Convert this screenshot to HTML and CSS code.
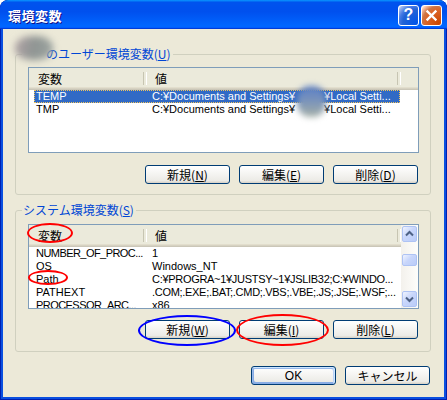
FILE: index.html
```html
<!DOCTYPE html>
<html lang="ja">
<head>
<meta charset="utf-8">
<title>環境変数</title>
<link rel="stylesheet" href="styles.css">
</head>
<body>
<div class="window">
  <div class="titlebar">
    <span class="title">環境変数</span>
    <div class="tb-controls">
      <div class="tb-btn help">?</div>
      <div class="tb-btn close"><svg width="21" height="21" viewBox="0 0 21 21"><path d="M6.5 6.5L14.5 14.5M14.5 6.5L6.5 14.5" stroke="#fff" stroke-width="2.4" stroke-linecap="square"/></svg></div>
    </div>
  </div>
  <div class="client">
    <fieldset class="group g-user">
      <legend><span class="uname"></span>のユーザー環境変数(<u>U</u>)</legend>
      <div class="list">
        <div class="lv">
          <div class="lv-head">
            <div class="hc c1">変数</div>
            <div class="hc c2">値</div>
            <div class="hc c3"></div>
          </div>
          <div class="lv-row sel">
            <div class="rc c1">TEMP</div>
            <div class="rc c2">C:¥Documents and Settings¥<span class="gap"></span>¥Local Setti...</div>
          </div>
          <div class="lv-row">
            <div class="rc c1">TMP</div>
            <div class="rc c2">C:¥Documents and Settings¥<span class="gap"></span>¥Local Setti...</div>
          </div>
        </div>
      </div>
      <div class="btn-row">
        <div class="btn">新規(<u>N</u>)</div>
        <div class="btn">編集(<u>E</u>)</div>
        <div class="btn">削除(<u>D</u>)</div>
      </div>
    </fieldset>
    <fieldset class="group g-sys">
      <legend>システム環境変数(<u>S</u>)</legend>
      <div class="list list-sys">
        <div class="lv">
          <div class="lv-head">
            <div class="hc c1">変数</div>
            <div class="hc c2">値</div>
          </div>
          <div class="lv-row">
            <div class="rc c1 caps">NUMBER_OF_PROC...</div>
            <div class="rc c2">1</div>
          </div>
          <div class="lv-row">
            <div class="rc c1">OS</div>
            <div class="rc c2">Windows_NT</div>
          </div>
          <div class="lv-row">
            <div class="rc c1">Path</div>
            <div class="rc c2 tight">C:¥PROGRA~1¥JUSTSY~1¥JSLIB32;C:¥WINDO...</div>
          </div>
          <div class="lv-row">
            <div class="rc c1">PATHEXT</div>
            <div class="rc c2 tight">.COM;.EXE;.BAT;.CMD;.VBS;.VBE;.JS;.JSE;.WSF;...</div>
          </div>
          <div class="lv-row">
            <div class="rc c1 caps">PROCESSOR_ARC...</div>
            <div class="rc c2">x86</div>
          </div>
        </div>
        <div class="sb">
          <div class="sb-btn"><svg width="15" height="16" viewBox="0 0 15 16"><path d="M4 9.5L7.5 6L11 9.5" fill="none" stroke="#4D6185" stroke-width="2"/></svg></div>
          <div class="sb-thumb"></div>
          <div class="sb-btn sb-down"><svg width="15" height="16" viewBox="0 0 15 16"><path d="M4 6.5L7.5 10L11 6.5" fill="none" stroke="#4D6185" stroke-width="2"/></svg></div>
        </div>
      </div>
      <div class="btn-row btn-row-sys">
        <div class="btn">新規(<u>W</u>)</div>
        <div class="btn">編集(<u>I</u>)</div>
        <div class="btn">削除(<u>L</u>)</div>
      </div>
    </fieldset>
    <div class="dlg-btns">
      <div class="btn btn-default">OK</div>
      <div class="btn">キャンセル</div>
    </div>
  </div>
  <div class="blob blob-user"></div>
  <div class="blob blob-path"></div>
  <div class="mark mark-red m-var"></div>
  <div class="mark mark-red m-path"></div>
  <div class="mark mark-blue m-new"></div>
  <div class="mark mark-red m-edit"></div>
</div>
</body>
</html>
```
FILE: styles.css
```css
* { box-sizing: border-box; }
html, body { margin: 0; padding: 0; background: #fff; }
body {
  font-family: "Noto Sans CJK JP", "Liberation Sans", sans-serif;
  font-size: 12px;
  color: #000;
}
.window {
  position: relative;
  width: 447px;
  height: 400px;
  background: #0A4FE0;
  border-radius: 8px 8px 0 0;
  box-shadow: inset 0 0 0 1px #0020B0;
  display: flex;
  flex-direction: column;
  overflow: hidden;
}
.titlebar {
  height: 29px;
  flex: none;
  display: flex;
  align-items: center;
  justify-content: space-between;
  padding: 0 5px 0 8px;
  border-radius: 8px 8px 0 0;
  background: linear-gradient(180deg, #0997ff, #0053ee 8%, #0050ee 40%, #06f 88%, #06f 93%, #005bff 95%, #003dd7 96%, #003dd7);
}
.title {
  color: #fff;
  font-weight: bold;
  font-size: 13px;
  letter-spacing: 0.5px;
  text-shadow: 1px 1px #0F1089;
  padding-top: 2px;
}
.tb-controls { display: flex; gap: 2px; padding-top: 1px; }
.tb-btn {
  width: 21px;
  height: 21px;
  border: 1px solid #fff;
  border-radius: 3px;
  display: flex;
  align-items: center;
  justify-content: center;
}
.help {
  background: radial-gradient(circle at 90% 90%, #0054e9 0%, #2263d5 55%, #4479e4 70%, #a3bbec 90%, #fff 100%);
  color: #fff;
  font-family: "Liberation Sans", sans-serif;
  font-weight: bold;
  font-size: 16px;
  line-height: 1;
}
.close {
  background: radial-gradient(circle at 90% 90%, #cc4600 0%, #dc6527 55%, #cd7546 70%, #ffccb2 90%, #fff 100%);
}
.close svg { display: block; margin: -1px; }

.client {
  flex: 1;
  margin: 0 3px 3px 3px;
  background: #ECE9D8;
  padding: 18px 0 0 12px;
  display: flex;
  flex-direction: column;
}
.group {
  margin: 0;
  width: 416px;
  min-width: 0;
  border: 1px solid #D0D0BF;
  border-radius: 3px;
  padding: 6px 11px 10px 12px;
}
.group legend {
  margin-left: -6px;
  padding: 0 2px 0 1px;
  line-height: 14px;
  height: 14px;
  color: #0046D5;
  white-space: nowrap;
}
.uname { display: inline-block; width: 23px; }
.g-sys { margin-top: 8px; padding-top: 7px; padding-bottom: 12px; }

.list {
  height: 86px;
  border: 1px solid #7F9DB9;
  background: #fff;
  display: flex;
  overflow: hidden;
}
.list-sys { height: 85px; }
.lv { flex: 1; min-width: 0; overflow: hidden; }
.lv-head {
  height: 22px;
  display: flex;
  background: #EBEADB;
  box-shadow: inset 0 -1px #CBC7B8, inset 0 -2px #D6D2C2, inset 0 -3px #E2DECD;
}
.hc {
  position: relative;
  display: flex;
  align-items: center;
  padding-bottom: 2px;
}
.hc::after {
  content: "";
  position: absolute;
  right: 0;
  top: 4px;
  bottom: 5px;
  width: 2px;
  border-left: 1px solid #C7C5B2;
  border-right: 1px solid #fff;
}
.hc.c1 { width: 118px; padding-left: 9px; }
.hc.c2 { width: 254px; padding-left: 8px; }
.hc.c3 { flex: 1; }
.hc.c3::after { display: none; }

.lv-row {
  display: flex;
  height: 13px;
  width: 366px;
  margin-left: 5px;
  font-family: "Liberation Sans", "Noto Sans CJK JP", sans-serif;
  font-size: 11px;
  line-height: 13px;
  white-space: nowrap;
}
.rc { overflow: hidden; }
.rc.c1 { width: 111px; padding-left: 2px; }
.rc.c2 { width: 255px; padding-left: 7px; }
.caps { letter-spacing: -0.55px; }
.tight { letter-spacing: -0.3px; }
.gap { display: inline-block; width: 29px; }
.sel {
  background: #316AC5;
  color: #fff;
  outline: 1px dotted #F2C45A;
  outline-offset: -1px;
}

.sb {
  width: 17px;
  flex: none;
  display: flex;
  flex-direction: column;
  align-items: flex-end;
  padding: 1px 1px 1px 0;
  background: linear-gradient(90deg, #F3F1EC, #FEFEFB);
}
.sb-btn, .sb-thumb {
  width: 15px;
  border: 1px solid #AEC3F4;
  border-radius: 2px;
  background: linear-gradient(135deg, #F0F4FF, #C8D6FB 45%, #BACCF8);
}
.sb-btn { height: 16px; }
.sb-btn svg { display: block; margin: -1px; }
.sb-thumb { height: 12px; margin-top: 12px; }
.sb-down { margin-top: auto; }

.btn-row {
  display: flex;
  justify-content: flex-end;
  gap: 9px;
  margin-top: 12px;
  padding-right: 1px;
}
.btn-row-sys { margin-top: 11px; }
.btn {
  width: 85px;
  height: 19px;
  border: 1px solid #003C74;
  border-radius: 3px;
  background: linear-gradient(180deg, #fff, #ECEBE6 86%, #D6D0C5);
  display: flex;
  align-items: center;
  justify-content: center;
  line-height: 1;
  white-space: nowrap;
}
.btn-default {
  font-family: "Liberation Sans", sans-serif;
  box-shadow: inset -1px 1px #CEE7FF, inset 1px 2px #98B8EA, inset -2px 2px #BCD4F6, inset 1px -1px #89ADE4, inset 2px -2px #89ADE4;
}
.dlg-btns {
  display: flex;
  justify-content: flex-end;
  gap: 9px;
  margin-top: 14px;
  margin-right: 14px;
}

.blob {
  position: absolute;
  border-radius: 45%;
}
.blob-user {
  left: 15px;
  top: 36px;
  width: 38px;
  height: 24px;
  background: linear-gradient(100deg, #B2A3A6, #8F9593 50%, #9EA6A2);
  filter: blur(3.5px);
}
.blob-path {
  left: 297px;
  top: 86px;
  width: 29px;
  height: 31px;
  background: linear-gradient(180deg, #5C80C6, #7892BC 45%, #A7B1A6 100%);
  filter: blur(3px);
}
.mark {
  position: absolute;
  border-radius: 50%;
}
.mark-red { border: 2px solid #FF0000; }
.mark-blue { border: 2px solid #0000FF; }
.m-var { left: 27px; top: 223px; width: 46px; height: 20px; }
.m-path { left: 28px; top: 270px; width: 40px; height: 15px; }
.m-new { left: 138px; top: 315px; width: 98px; height: 31px; }
.m-edit { left: 236px; top: 314px; width: 93px; height: 32px; }
```
